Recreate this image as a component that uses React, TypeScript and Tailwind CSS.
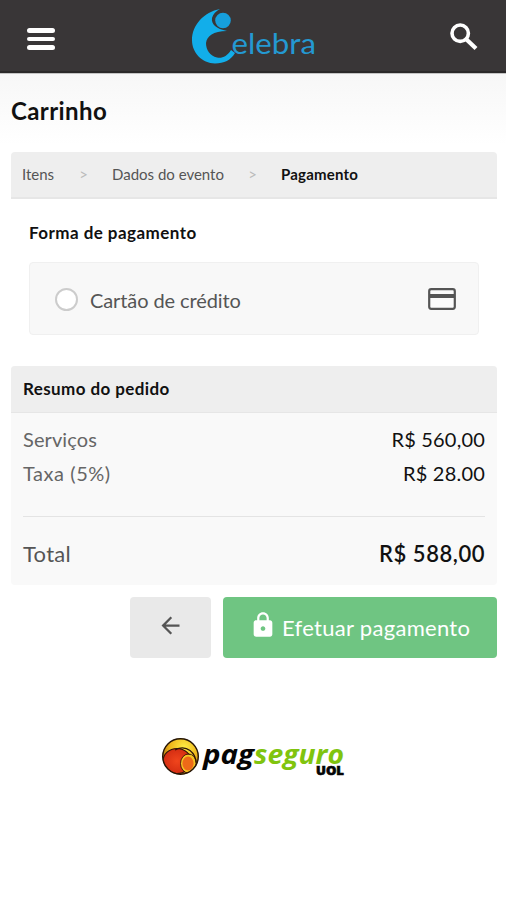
import { MdArrowBack, MdLock } from 'react-icons/md';

const steps = [
  { label: 'Itens', active: false, className: 'w-[90px]' },
  { label: 'Dados do evento', active: false, className: 'w-[169px]' },
  { label: 'Pagamento', active: true, className: '' },
];

const summary = [
  { label: 'Serviços', value: 'R$ 560,00', labelClass: 'tracking-[0.1px]' },
  { label: 'Taxa (5%)', value: 'R$ 28.00', labelClass: 'tracking-[0.55px]' },
];

function CelebraLogo() {
  return (
    <svg width="128" height="58" viewBox="190 8 128 58" role="img" aria-label="Celebra">
      <path
        d="M220 9C204 12 192 25 192 40C192 53 202 63 215 63.500C224 63.500 231 60 235 53L231 50C227 56.500 222 58.500 217 57.500C210 56 206 50 206 43C207 36 213 31 227 31C216 29 211 24 212 18C213 14 216 11 220 9Z"
        fill="#12aeea"
      />
      <circle cx="223" cy="20.500" r="7.800" fill="#169fdc" />
      <text
        x="231.500"
        y="54"
        textLength="84.500"
        lengthAdjust="spacingAndGlyphs"
        fill="#2499d2"
        fontSize="28"
        fontFamily="Lato, sans-serif"
      >
        elebra
      </text>
    </svg>
  );
}

function PagSeguroLogo() {
  return (
    <svg width="186" height="42" viewBox="160 736 186 42" role="img" aria-label="PagSeguro UOL">
      <defs>
        <radialGradient id="ball" cx="0.6" cy="0.25" r="0.8">
          <stop offset="0" stopColor="#ffee45" />
          <stop offset="0.5" stopColor="#eeb41a" />
          <stop offset="1" stopColor="#8f520b" />
        </radialGradient>
        <radialGradient id="ball-red">
          <stop offset="0" stopColor="#f0451c" />
          <stop offset="1" stopColor="#d42d12" />
        </radialGradient>
        <clipPath id="ball-clip">
          <circle cx="180.500" cy="756.500" r="17.500" />
        </clipPath>
      </defs>
      <circle cx="180.500" cy="756.500" r="18" fill="url(#ball)" />
      <g clipPath="url(#ball-clip)" stroke="#2d1308" strokeWidth="1.200">
        <ellipse cx="177" cy="761" rx="14" ry="12.500" fill="url(#ball-red)" />
        <path d="M175 750C186 744 197 752 196 766" fill="none" />
        <ellipse cx="188" cy="763.500" rx="6.500" ry="8" fill="#ee6a18" stroke="#f5c422" strokeWidth="1.800" />
        <ellipse cx="188.500" cy="763.500" rx="8" ry="9.500" fill="none" strokeWidth="0.800" />
      </g>
      <circle cx="180.500" cy="756.500" r="17.800" fill="none" stroke="#241407" strokeWidth="1.400" />
      <g fontFamily="'Open Sans', sans-serif" fontWeight="700" fontStyle="italic" fontSize="26">
        <text x="203" y="763.500" textLength="51" lengthAdjust="spacingAndGlyphs" fill="#050505">
          pag
        </text>
        <text x="254" y="763.500" textLength="90" lengthAdjust="spacingAndGlyphs" fill="#80c40e">
          seguro
        </text>
      </g>
      <text
        x="316"
        y="775"
        textLength="28"
        lengthAdjust="spacingAndGlyphs"
        fill="#050505"
        stroke="#050505"
        strokeWidth="0.600"
        fontFamily="'Open Sans', sans-serif"
        fontWeight="800"
        fontSize="12"
      >
        UOL
      </text>
    </svg>
  );
}

export default function App() {
  return (
    <div className="flex h-[900px] w-[506px] flex-col overflow-hidden bg-white font-['Lato',sans-serif] text-[#111]">
      {/* Header */}
      <header className="flex h-[73px] shrink-0 items-start justify-between border-b-2 border-[#2b292a] bg-[#393637] px-[27px]">
        <button className="mt-7 flex w-7 flex-col gap-1" aria-label="Menu">
          <span className="h-[4.5px] w-full rounded-sm bg-white" />
          <span className="h-[4.5px] w-full rounded-sm bg-white" />
          <span className="h-[4.5px] w-full rounded-sm bg-white" />
        </button>
        <div className="mt-2 ml-1">
          <CelebraLogo />
        </div>
        <button className="mt-[22px]" aria-label="Buscar">
          <svg width="30" height="30" viewBox="0 0 30 30" fill="none" stroke="white" strokeWidth="3.600">
            <circle cx="11.200" cy="11.200" r="8.200" />
            <path d="M17 17L27 26.500" strokeWidth="4.200" />
          </svg>
        </button>
      </header>

      <main className="flex flex-col border-t border-[#c4c4c4] bg-linear-to-b from-[#f7f7f7] to-white to-10% pr-[9px] pl-[11px]">
        <h1 className="mt-5 h-[34px] text-2xl leading-[34px] font-bold tracking-[0.4px]">Carrinho</h1>

        {/* Steps */}
        <nav className="mt-6 flex h-[47px] items-center rounded-t border-b-2 border-[#e6e6e6] bg-[#eee] pb-px pl-[11px] text-[15px]">
          {steps.map((step) => (
            <div key={step.label} className={`flex items-center justify-between ${step.className}`}>
              <span className={step.active ? 'font-bold tracking-[0.2px]' : 'text-[#555]'}>{step.label}</span>
              {!step.active && <span className="mr-6 text-[15px] text-[#bbb]">&gt;</span>}
            </div>
          ))}
        </nav>

        {/* Payment method */}
        <section className="px-[18px] pt-[22px]">
          <h2 className="h-6 text-[17px] leading-6 font-bold tracking-[0.45px]">Forma de pagamento</h2>
          <label className="mt-[17px] flex h-[73px] items-center rounded border border-[#f0f0f0] bg-[#f8f8f8] pt-0.5 pr-[22px] pl-[25px]">
            <span className="size-[23px] rounded-full border-2 border-[#ccc] bg-white" />
            <span className="ml-3 text-xl tracking-[-0.1px] text-[#555]">Cartão de crédito</span>
            <svg className="mb-0.5 ml-auto" width="28" height="22" viewBox="0 0 28 22">
              <rect x="1.200" y="1.200" width="25.600" height="19.600" rx="2" fill="#fbfbfb" stroke="#555" strokeWidth="2.200" />
              <path d="M1 8H27" stroke="#555" strokeWidth="4" />
            </svg>
          </label>
        </section>

        {/* Order summary */}
        <section className="mt-[31px] h-[219px] rounded bg-[#f9f9f9]">
          <h2 className="h-[47px] rounded-t border-b border-[#e6e6e6] bg-[#eee] pl-3 text-[17px] leading-[45px] font-bold tracking-[0.4px]">
            Resumo do pedido
          </h2>
          <dl className="mx-3 border-b border-[#e4e4e4] pt-[9px] pb-[26px] text-[20px] leading-[34px]">
            {summary.map((row) => (
              <div key={row.label} className="flex justify-between">
                <dt className={`text-[#666] ${row.labelClass}`}>{row.label}</dt>
                <dd className="tracking-[0.2px]">{row.value}</dd>
              </div>
            ))}
          </dl>
          <div className="mx-3 flex justify-between pt-5 text-[22px] leading-[34px]">
            <span className="tracking-[0.3px] text-[#555]">Total</span>
            <span className="font-semibold tracking-[0.55px]">R$ 588,00</span>
          </div>
        </section>

        {/* Actions */}
        <div className="mt-3 flex h-[61px] justify-end gap-3">
          <button className="flex w-[81px] items-center justify-center rounded bg-[#e9e9e9] pb-[5px] text-[#555]" aria-label="Voltar">
            <MdArrowBack size={27} />
          </button>
          <button className="flex w-[274px] items-center rounded bg-[#6fc582] pl-[26px] text-[22px] text-white">
            <MdLock size={28} className="mb-1.5" />
            <span className="ml-[5px] tracking-[0.3px] whitespace-nowrap">Efetuar pagamento</span>
          </button>
        </div>

        <footer className="mt-[78px] mr-0.5 flex justify-center">
          <PagSeguroLogo />
        </footer>
      </main>
    </div>
  );
}
